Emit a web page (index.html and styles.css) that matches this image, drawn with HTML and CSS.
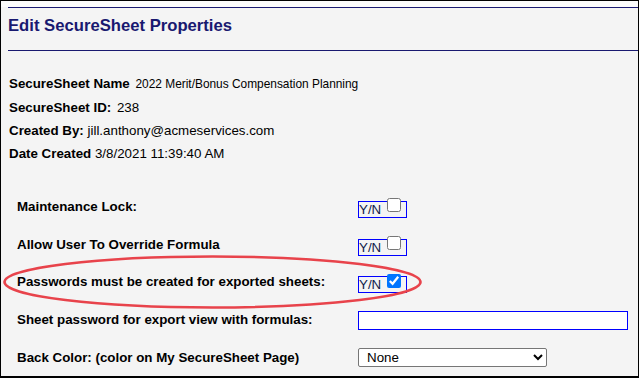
FILE: index.html
```html
<!DOCTYPE html>
<html>
<head>
<meta charset="utf-8">
<link rel="stylesheet" href="styles.css">
</head>
<body>
<div class="frame">
  <div class="topstrip"></div>
  <div class="header"><h1 class="title">Edit SecureSheet Properties</h1></div>
  <div class="info">
    <div class="info-row"><b class="key">SecureSheet Name</b> <span class="val wide small">2022 Merit/Bonus Compensation Planning</span></div>
    <div class="info-row"><b class="key">SecureSheet ID:</b> <span class="val wide">238</span></div>
    <div class="info-row"><b class="key">Created By:</b> <span class="val">jill.anthony@acmeservices.com</span></div>
    <div class="info-row"><b class="key">Date Created</b> <span class="val">3/8/2021 11:39:40 AM</span></div>
  </div>
  <div class="form">
    <div class="label">Maintenance Lock:</div>
    <div class="ctrl yn-cell"><span class="yn">Y/N <input type="checkbox" class="chk"></span></div>
    <div class="label">Allow User To Override Formula</div>
    <div class="ctrl yn-cell"><span class="yn">Y/N <input type="checkbox" class="chk"></span></div>
    <div class="label">Passwords must be created for exported sheets:</div>
    <div class="ctrl yn-cell"><span class="yn">Y/N <input type="checkbox" class="chk" checked></span></div>
    <div class="label">Sheet password for export view with formulas:</div>
    <div class="ctrl input-cell"><input type="text" class="pw"></div>
    <div class="label">Back Color: (color on My SecureSheet Page)</div>
    <div class="ctrl"><select class="color"><option>None</option></select></div>
  </div>
  <svg class="highlight" width="639" height="378" viewBox="0 0 639 378">
    <ellipse cx="212.5" cy="282" rx="208" ry="25.5" fill="none" stroke="#e8434b" stroke-width="2.6"/>
  </svg>
</div>
</body>
</html>
```
FILE: styles.css
```css
html, body {
  margin: 0;
  padding: 0;
  background: #f4f4f4;
}
.frame {
  position: relative;
  width: 639px;
  height: 378px;
  box-sizing: border-box;
  border: 1px solid #000;
  border-bottom-width: 2px;
  background: #f4f4f4;
  font-family: "Liberation Sans", Arial, sans-serif;
  color: #000;
  overflow: hidden;
}
.topstrip {
  height: 6px;
  background: #fbfbfb;
}
.header {
  margin-left: 7px;
  border-top: 1px solid #191970;
  border-bottom: 1px solid #191970;
  padding: 6px 0 12px;
}
.title {
  margin: 0;
  font-size: 16.67px;
  line-height: 24px;
  font-weight: bold;
  color: #191970;
}
.info {
  margin-top: 21px;
  padding-left: 8px;
  font-size: 13.33px;
  line-height: 23px;
}
.val.wide {
  margin-left: 2px;
}
.val.small {
  font-size: 11.9px;
}
.form {
  margin-top: 22.5px;
  padding-left: 16px;
  display: grid;
  grid-template-columns: 341px 1fr;
  grid-auto-rows: 37.75px;
  font-size: 13.33px;
}
.label {
  align-self: center;
  font-weight: bold;
  line-height: 15px;
}
.ctrl {
  align-self: center;
  line-height: 15px;
}
.yn-cell {
  padding-top: 2.4px;
}
.input-cell {
  padding-top: 2px;
}
.yn {
  border: 1px solid #0000ff;
  color: #10204a;
}
.chk {
  width: 14px;
  height: 14px;
  margin: 0 5px 0 2px;
  vertical-align: 1.6px;
}
.pw {
  display: block;
  width: 270px;
  height: 19px;
  box-sizing: border-box;
  border: 1px solid #0000ff;
  background: #fff;
  margin: 0;
  padding: 0 3px;
  font-family: "Liberation Sans", Arial, sans-serif;
}
.color {
  display: block;
  width: 189px;
  height: 19.5px;
  box-sizing: border-box;
  border: 1px solid #767676;
  border-radius: 2px;
  background: #fff;
  margin: 0;
  padding: 0 0 0 4px;
  font-family: "Liberation Sans", Arial, sans-serif;
  font-size: 13.33px;
  color: #000;
}
.highlight {
  position: absolute;
  left: -1px;
  top: -1px;
  pointer-events: none;
}
```
